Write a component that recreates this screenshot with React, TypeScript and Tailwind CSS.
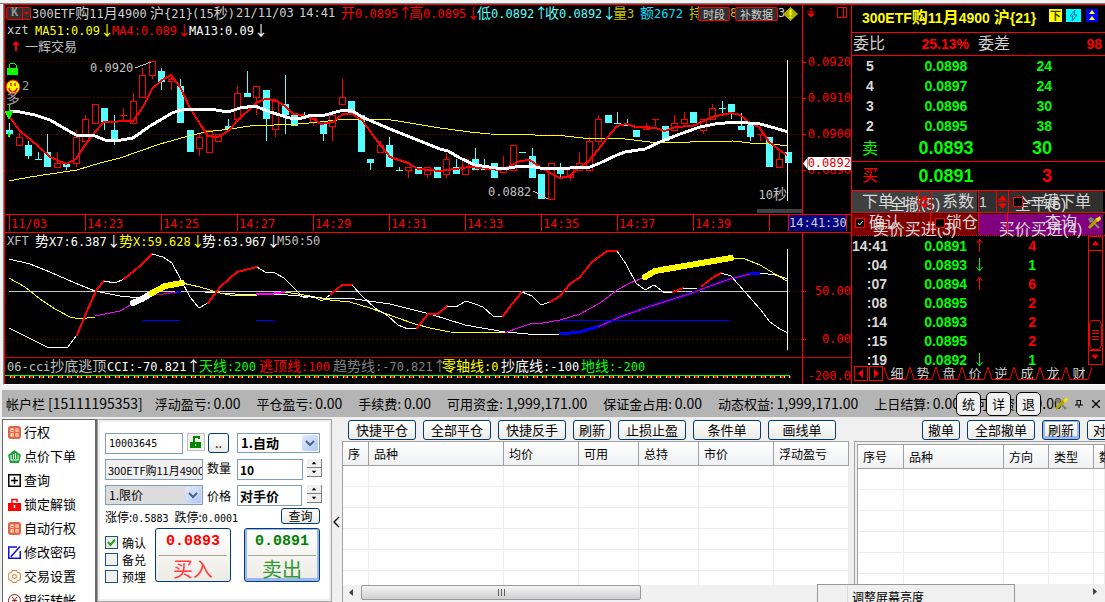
import { Fragment } from "react";
import type { ReactNode } from "react";
import clsx from "clsx";

type Candle = ["r" | "c", number, number, number, number];

// direction, high, low, body top, body bottom
const candles: Candle[] = [
  ["c", 123, 137, 130, 134], ["r", 133, 145, 137, 145], ["c", 141, 159, 145, 156],
  ["c", 152, 160, 159, 160], ["c", 134, 167, 152, 167], ["r", 152, 167, 163, 167],
  ["c", 164, 170, 164, 167], ["r", 130, 167, 137, 163], ["r", 115, 141, 119, 141],
  ["r", 104, 123, 104, 123], ["c", 108, 130, 108, 122], ["c", 115, 145, 130, 141],
  ["r", 108, 120, 115, 116], ["r", 93, 123, 101, 123], ["r", 68, 97, 75, 97],
  ["r", 61, 79, 61, 75], ["c", 68, 90, 71, 82], ["r", 75, 90, 79, 81],
  ["c", 79, 123, 86, 123], ["c", 130, 152, 130, 152], ["r", 134, 156, 137, 148],
  ["r", 130, 152, 130, 152], ["r", 134, 141, 134, 141], ["c", 119, 129, 126, 129],
  ["r", 86, 119, 93, 119], ["c", 71, 97, 93, 97], ["r", 86, 115, 86, 97],
  ["c", 90, 141, 90, 119], ["r", 101, 137, 101, 129], ["c", 75, 134, 104, 115],
  ["c", 115, 126, 115, 126], ["c", 112, 118, 115, 118], ["r", 115, 126, 118, 122],
  ["c", 123, 141, 123, 134], ["r", 115, 141, 115, 126], ["r", 79, 104, 97, 104],
  ["c", 101, 115, 101, 115], ["c", 115, 152, 115, 152], ["c", 159, 170, 159, 163],
  ["r", 141, 152, 145, 152], ["c", 137, 167, 145, 167], ["c", 167, 171, 170, 171],
  ["r", 167, 178, 167, 170], ["c", 167, 174, 167, 174], ["r", 167, 178, 167, 174],
  ["c", 167, 178, 167, 178], ["r", 153, 178, 159, 174], ["c", 159, 174, 167, 174],
  ["r", 159, 174, 159, 174], ["c", 148, 170, 159, 170], ["c", 159, 170, 167, 170],
  ["c", 163, 178, 163, 178], ["r", 156, 172, 168, 172], ["r", 145, 170, 145, 170],
  ["c", 152, 153, 152, 153], ["c", 148, 178, 156, 178], ["c", 174, 199, 174, 199],
  ["r", 163, 199, 163, 199], ["c", 163, 177, 169, 174], ["r", 167, 181, 168, 177],
  ["r", 152, 170, 163, 170], ["r", 137, 170, 141, 170], ["r", 115, 145, 119, 141],
  ["c", 115, 123, 115, 123], ["c", 112, 124, 123, 124], ["c", 119, 126, 124, 126],
  ["c", 130, 137, 130, 137], ["r", 123, 130, 126, 129], ["r", 119, 126, 119, 120],
  ["c", 126, 141, 126, 141], ["r", 115, 130, 123, 130], ["r", 112, 123, 119, 123],
  ["c", 112, 123, 112, 123], ["r", 119, 134, 119, 130], ["r", 104, 119, 108, 119],
  ["c", 101, 113, 108, 109], ["c", 104, 119, 104, 112], ["c", 113, 130, 126, 130],
  ["c", 125, 141, 125, 137], ["r", 134, 141, 134, 135], ["c", 137, 167, 137, 167],
  ["r", 152, 167, 159, 167], ["c", 152, 163, 152, 163],
];

const ma51 =
  "9,181 30,177 50,174 77,170 100,163 120,158 140,151 160,144 185,137 205,132 230,129 250,126 298,124 320,122 345,119 385,119 410,123 440,128 470,132 490,134 535,135 565,136 583,138 617,138 650,142 690,142 733,141 750,143 765,143 788,146";
const ma4 =
  "9,116 20,131 38,146 50,157 66,164 76,159 85,145 95,132 104,122 133,121 143,107 152,89 162,80 171,75 180,87 190,108 200,124 208,136 218,137 228,131 240,118 250,109 256,103 265,99 275,100 285,106 293,114 303,115 313,119 321,124 333,122 343,114 352,114 362,120 375,138 390,157 408,163 418,169 440,171 455,169 470,167 500,170 510,166 520,161 530,160 540,167 550,173 560,178 570,176 578,168 588,162 598,150 607,138 617,126 626,124 636,127 655,128 665,131 675,127 692,126 702,122 712,117 721,115 731,113 740,115 750,123 759,127 769,142 778,149 788,156";
const ma13 =
  "9,111 20,112 35,115 50,120 62,127 76,135 95,136 105,140 115,141 133,138 150,126 162,119 172,113 185,109 210,109 228,112 240,108 255,106 270,112 290,118 302,118 312,115 325,115 340,111 351,110 362,117 390,129 420,141 440,149 448,151 460,158 475,165 503,169 515,167 530,166 545,169 570,168 590,167 600,163 617,155 625,152 645,149 662,141 680,134 700,127 715,124 735,122 760,124 775,128 788,132";

// stroke colour, stroke width, points
const trendLines: [string, number, string][] = [
  ["#fff", 1, "9,259 30,264 50,272 75,283 95,291 120,296 140,298"],
  ["#fff", 1, "205,292 235,294 265,295 275,294 300,296 322,298 355,299 390,304 430,314 465,325 505,332 540,335 560,334"],
  ["#00f", 3, "560,334 580,332 600,326 620,317 645,308 670,300 695,292 710,286 730,279 750,274 760,273"],
  ["#f00", 1, "598,327 620,317 645,308 670,300 695,292 710,286 730,279 750,274"],
  ["#fff", 1, "760,273 775,275 788,279"],
  ["#ff0", 1, "9,278 25,287 40,299 55,309 70,317 80,319 95,317"],
  ["#f0f", 1, "95,316 120,311 132,304"],
  ["#00f", 2, "142,296 180,292"],
  ["#f00", 1, "157,295 176,292"],
  ["#fff", 6, "133,303 142,299 152,293"],
  ["#ff0", 6, "152,293 165,286 182,283"],
  ["#ff0", 1, "182,283 200,287 220,293 235,296 257,295"],
  ["#f0f", 2, "257,294 270,294 285,292"],
  ["#ff0", 1, "285,292 310,296 330,300 350,302 370,308 395,317 415,324 430,328 450,332 505,333"],
  ["#f0f", 1, "505,333 515,329 530,324 543,323 560,320 580,314 600,303 617,290 630,283 645,277"],
  ["#ff0", 6, "645,277 655,271 690,265 731,258"],
  ["#ff0", 1, "731,258 745,259 760,265 775,274 787,281"],
  ["#fff", 1, "9,328 25,336 47,347 67,348 77,335"],
  ["#f00", 2, "77,335 87,311 97,289 104,281"],
  ["#fff", 1, "104,281 115,283 124,279"],
  ["#f00", 2, "124,279 140,266 152,254"],
  ["#fff", 1, "152,254 163,257 172,263 181,280 190,297 199,308 208,303"],
  ["#f00", 2, "208,303 220,287 237,272 257,267"],
  ["#fff", 1, "257,267 265,272 275,273 284,278 294,288 304,298 312,296 322,301 331,294"],
  ["#f00", 2, "331,294 342,285 352,285"],
  ["#fff", 1, "352,285 362,296 375,308 388,316 398,325 408,329 417,328"],
  ["#f00", 2, "417,328 428,314 438,314 447,306"],
  ["#fff", 1, "447,306 456,307 466,301 475,304 483,307 493,316 503,316"],
  ["#f00", 2, "503,316 512,304 522,292"],
  ["#fff", 1, "522,292 532,296 541,305 550,302"],
  ["#f00", 2, "550,302 560,296 570,284 580,277 592,262 607,251 617,251"],
  ["#fff", 1, "617,251 626,264 636,283 645,290 654,285 665,293 673,292"],
  ["#f00", 2, "673,292 683,288"],
  ["#fff", 1, "683,288 697,288"],
  ["#f00", 2, "702,286 712,278 721,273"],
  ["#fff", 1, "721,273 731,276 745,292 760,309 770,322 780,329 788,333"],
  ["#00f", 1, "142,320 180,320"],
  ["#00f", 1, "256,320 275,320"],
  ["#00f", 1, "560,320 730,320"],
];

const book = [
  ["5", "0.0898", "24"],
  ["4", "0.0897", "24"],
  ["3", "0.0896", "30"],
  ["2", "0.0895", "38"],
];

const ticks = [
  { time: "14:41", price: "0.0891", dir: "up", qty: 4 },
  { time: ":04", price: "0.0893", dir: "down", qty: 1 },
  { time: ":07", price: "0.0894", dir: "up", qty: 6 },
  { time: ":08", price: "0.0895", dir: "", qty: 2 },
  { time: ":14", price: "0.0893", dir: "", qty: 2 },
  { time: ":15", price: "0.0895", dir: "", qty: 2 },
  { time: ":19", price: "0.0892", dir: "down", qty: 1 },
];

const times = ["11/03", "14:23", "14:25", "14:27", "14:29", "14:31", "14:33", "14:35", "14:37", "14:39"];

const xb =
  "h-5 shrink-0 rounded-[3px] border border-[#003c74] bg-linear-to-b from-white to-[#ecebe5] text-center text-[13px] leading-[18px] text-black";

// Latin runs in a narrow monospace, CJK and arrows at full width
function Mono({ text, className }: { text: string; className?: string }) {
  return (
    <span className={clsx("shrink-0 whitespace-pre font-['DejaVu_Sans_Mono',monospace] text-[12px]", className)}>
      {text.split(/([\u2190-\u2193\u4e00-\u9fff]+)/).map((run, i) =>
        i % 2 ? (
          <span key={i} className="font-['Noto_Sans_CJK_SC',sans-serif] text-[14px]">{run}</span>
        ) : (
          <Fragment key={i}>{run}</Fragment>
        )
      )}
    </span>
  );
}

function Tools({ className }: { className?: string }) {
  return (
    <svg viewBox="0 0 14 14" className={clsx("h-3.5 w-3.5 shrink-0", className)}>
      <path d="M1 3l3-2 3 2-1 2 7 6-2 2-6-7-2 1z" fill="#808070" />
      <path d="M13 1l-4 1-8 9 2 2 8-8z" fill="#b0a000" />
      <path d="M13 0l1 3-3 3-2-3z" fill="#f0e020" />
    </svg>
  );
}

function MainChart() {
  return (
    <div className="relative">
      <svg viewBox="5 54 797 160" preserveAspectRatio="none" shapeRendering="crispEdges" className="block h-[160px] w-full">
        {[61, 97, 134, 170].map((y) => (
          <line key={y} x1="5" x2="802" y1={y + 0.5} y2={y + 0.5} stroke="#900000" strokeDasharray="1 3" />
        ))}
        {candles.map(([kind, hi, lo, top, bottom], i) => {
          const x = Math.round(9 + i * 9.5);
          const color = kind === "r" ? "#f00" : "#5ff";
          const flat = bottom - top < 2;
          return (
            <g key={i} fill={color}>
              {hi < top && <rect x={x} y={hi} width="1" height={top - hi} />}
              {lo > bottom && <rect x={x} y={bottom} width="1" height={lo - bottom} />}
              {kind === "r" && !flat ? (
                <rect x={x - 2.5} y={top + 0.5} width="6" height={bottom - top} fill="none" stroke={color} />
              ) : (
                <rect x={x - 3} y={top} width="7" height={Math.max(1, bottom - top)} />
              )}
            </g>
          );
        })}
        <g fill="none">
          <polyline points={ma51} stroke="#ff0" />
          <polyline points={ma4} stroke="#f00" strokeWidth="2" />
          <polyline points={ma13} stroke="#fff" strokeWidth="3" />
          <path d="M135 68l16-6M533 191l15 8" stroke="#c0c0c0" />
        </g>
        <rect x="787" y="60" width="1" height="141" fill="#fff" />
        <rect x="757" y="209" width="45" height="4" fill="#404040" />
        {/* lock, face and entry marker */}
        <path d="M9 69v-4l2-2h3l2 2v4" fill="none" stroke="#0f0" />
        <rect x="7" y="68" width="11" height="7" fill="#0f0" />
        <rect x="12" y="70" width="1" height="2" fill="#ff0" />
        <g shapeRendering="auto">
          <circle cx="13" cy="87" r="7" fill="#ff0" stroke="#f00" />
          <path d="M9 88c1 5 7 5 8 0M11 83v3M15 83v3" fill="none" stroke="#f00" strokeWidth="1.4" />
        </g>
        <path d="M9 105v8M5 111h8l-4 8z" stroke="#0f0" fill="#0f0" />
        <path d="M8 132l3 3-3 2z" fill="#0f0" />
      </svg>
      <Mono text="2" className="absolute left-[17px] top-[25px] leading-[14px] text-[#a0a0a0]" />
      <Mono text="多" className="absolute left-[1px] top-[36px] leading-[14px] text-[#a0a0a0]" />
      <Mono text="0.0920" className="absolute left-[85px] top-[7px] leading-[14px] text-[#c0c0c0]" />
      <Mono text="0.0882" className="absolute left-[483px] top-[131px] leading-[14px] text-[#c0c0c0]" />
      <Mono text="10秒" className="absolute right-[15px] top-[132px] leading-[14px] text-[#c0c0c0]" />
    </div>
  );
}

function QuotePane() {
  return (
    <section className="flex border-b border-[#f00]">
      <div className="min-w-0 flex-1">
        <div className="flex h-[17px] items-center overflow-x-clip leading-[17px] text-[#d0d0d0]">
          <div className="mx-px flex h-[13px] w-[25px] shrink-0 rounded-[2px] border border-[#f00] bg-[#303030]">
            <span className="flex-1 text-center font-['Liberation_Mono',monospace] text-[12px] font-bold leading-[11px] text-[#909090]">K</span>
            <svg viewBox="0 0 8 11" className="h-full w-2 border-l border-[#f00]"><path d="M1 4h6l-3 3z" fill="#f00" /></svg>
          </div>
          <Mono text="300ETF购11月4900" className="w-[118px]" />
          <Mono text="沪{21}" className="w-[42px]" />
          <Mono text="(15秒)" className="w-[44px]" />
          <Mono text="21/11/03" className="w-[63px]" />
          <Mono text="14:41" className="w-[42px]" />
          <Mono text="开0.0895↑" className="w-[68px] text-[#f00]" />
          <Mono text="高0.0895↓" className="w-[68px] text-[#f00]" />
          <Mono text="低0.0892↑" className="w-[68px] text-[#5ff]" />
          <Mono text="收0.0892↓" className="w-[68px] text-[#5ff]" />
          <Mono text="量3" className="w-[27px] text-[#c8c800]" />
          <Mono text="额2672" className="w-[49px] text-[#00e0ff]" />
          <Mono text="持" className="w-[9px] text-[#c8c800]" />
          <button className="relative h-[14px] w-[32px] shrink-0 rounded-[2px] border border-[#f00] bg-[#303030] text-[11px] leading-[12px]">时段</button>
          <Mono text="8" className="w-[5px] text-[#c8c800]" />
          <button className="relative h-[14px] w-[43px] shrink-0 rounded-[2px] border border-[#f00] bg-[#303030] text-[11px] leading-[12px]">补数据</button>
          <Mono text="3" className="w-[5px]" />
          <svg viewBox="0 0 15 14" className="relative h-3.5 w-[15px] shrink-0">
            <path d="M7.500 0L15 7l-7.500 7L0 7z" fill="#b0b000" />
            <path d="M7 3h1v5h-1zM7 10h1v1h-1z" fill="#ff0" stroke="#ff0" />
          </svg>
        </div>
        <div className="flex h-4 items-center pl-0.5 leading-4">
          <Mono text="xzt" className="w-7 text-[#d0d0d0]" />
          <Mono text="MA51:0.09↓" className="w-[77px] text-[#ff0]" />
          <Mono text="MA4:0.089↓" className="w-[77px] text-[#f00]" />
          <Mono text="MA13:0.09↓" className="text-white" />
        </div>
        <div className="flex h-4 items-center gap-1 pl-1.5 leading-4">
          <svg viewBox="0 0 10 10" className="h-2.5 w-2.5"><path d="M5 0l4 4H6v6H4V4H1z" fill="#f00" /></svg>
          <span className="text-[13px] text-[#c0c0c0]">一辉交易</span>
        </div>
        <MainChart />
      </div>
      <div className="relative w-[49px] shrink-0 border-l border-[#f00]">
        <div className="flex h-[39px] items-start justify-between pl-[3px] pr-1 pt-0.5">
          <svg viewBox="0 0 10 10" className="mt-px h-2.5 w-2.5"><path d="M3 0h4M5 0v6M1 4h8M2 6h6l-3 3z" stroke="#f00" fill="#f00" /></svg>
          <svg viewBox="0 0 10 11" className="h-[11px] w-2.5"><path d="M.5.5h9v10h-9zM6.500 0v11" stroke="#f00" fill="none" /></svg>
        </div>
        {["0.0920", "0.0910", "0.0900", "0.0890"].map((v) => (
          <div key={v} className="flex h-9 items-center gap-0.5 text-[#f00]">
            <i className="h-px w-[3px] bg-[#f00]" />
            <Mono text={v} />
          </div>
        ))}
        <div className="absolute left-0 top-[152px] flex h-[13px] w-full items-center">
          <svg viewBox="0 0 5 13" className="h-[13px] w-[5px]"><path d="M5 0L0 6.500 5 13z" fill="#fff" /></svg>
          <Mono text="0.0892" className="flex-1 bg-white leading-[13px] text-[#e00000]" />
        </div>
      </div>
    </section>
  );
}

function Charts() {
  return (
    <div className="min-w-0 flex-1 overflow-x-clip">
      <QuotePane />
      <div className="flex h-[18px] border-b border-[#f00] pl-1 text-[#f00]">
        {times.map((t) => (
          <Mono key={t} text={t} className="h-4 w-[76px] border-l border-[#f00] pl-px leading-[18px]" />
        ))}
        <span className="h-4 w-[19px] shrink-0 border-l border-[#f00]" />
        <Mono text="14:41:30" className="h-4 w-[59px] border-x border-[#f00] bg-[#000080] leading-[16px] text-[#d0d0d0]" />
      </div>
      <section className="flex border-b border-[#d00000]">
        <div className="min-w-0 flex-1">
          <div className="flex h-4 items-center pl-0.5 leading-4">
            <Mono text="XFT" className="w-7 text-[#c0c0c0]" />
            <Mono text="势X7:6.387↓" className="w-[84px] text-white" />
            <Mono text="势X:59.628↓" className="w-[83px] text-[#ff0]" />
            <Mono text="势:63.967↓" className="w-[75px] text-white" />
            <Mono text="M50:50" className="text-[#c0c0c0]" />
          </div>
          <svg viewBox="5 249 797 108" preserveAspectRatio="none" shapeRendering="crispEdges" className="block h-[108px] w-full">
            <path d="M5 291.500h797M5 339.500h797" stroke="#900000" strokeDasharray="1 3" />
            <path d="M9 291.500h779" stroke="#c8c8c8" />
            {trendLines.map(([stroke, width, points], i) => (
              <polyline key={i} points={points} fill="none" stroke={stroke} strokeWidth={width} strokeLinecap="round" />
            ))}
            <path d="M787.500 249v101" stroke="#fff" />
          </svg>
        </div>
        <div className="w-[49px] shrink-0 border-l border-[#f00] pt-[34px] text-[#f00]">
          <div className="flex h-12 items-center justify-between">
            <i className="h-px w-[3px] bg-[#f00]" />
            <Mono text="50.00" />
          </div>
          <div className="flex h-[42px] items-center justify-between pt-1.5">
            <i className="h-px w-[3px] bg-[#f00]" />
            <Mono text="0.00" />
          </div>
        </div>
      </section>
      <section className="flex h-[26px]">
        <div className="min-w-0 flex-1">
          <div className="flex h-[17px] items-center pl-0.5 leading-[17px]">
            <Mono text="06-cci抄底逃顶" className="w-[100px] text-[#c0c0c0]" />
            <Mono text="CCI:-70.821↑" className="w-[92px] text-white" />
            <Mono text="天线:200" className="w-[60px] text-[#0f0]" />
            <Mono text="逃顶线:100" className="w-[74px] text-[#f00]" />
            <Mono text="趋势线:-70.821↑" className="w-[109px] text-[#808080]" />
            <Mono text="零轴线:0" className="w-[59px] text-[#ff0]" />
            <Mono text="抄底线:-100" className="w-20 text-white" />
            <Mono text="地线:-200" className="text-[#0f0]" />
          </div>
          <svg viewBox="5 375 797 9" preserveAspectRatio="none" shapeRendering="crispEdges" className="block h-[9px] w-full">
            <path d="M5 375.500h785" stroke="#0f0" />
            <path d="M10 376.500h780" stroke="#ff0" strokeWidth="2" strokeDasharray="5 4.500" />
            <path d="M11 376.500h780" stroke="#f00" strokeWidth="2" strokeDasharray="3 6.500" />
          </svg>
        </div>
        <div className="flex w-[49px] shrink-0 justify-end border-l border-[#f00] pt-2.5">
          <Mono text="-200.0" className="leading-4 text-[#f00]" />
        </div>
      </section>
    </div>
  );
}

function SpinMark() {
  return (
    <svg viewBox="0 0 12 21" className="h-[21px] w-3 shrink-0 border-l border-[#f00]">
      <path d="M6 4l4 5H2zM6 18l-4-5h8zM0 10.500h12" fill="#f00" stroke="#f00" strokeWidth=".6" />
    </svg>
  );
}

function QuickOrder() {
  return (
    <div className="relative h-[44px] text-[16px] leading-5 text-[#d8d8d8]">
      <div className="grid h-full grid-cols-2 grid-rows-2 gap-px pr-0.5">
        <button className="bg-[#404040] pt-1">全撤(5)</button>
        <button className="bg-[#303030] pt-1">全平(6)</button>
        <button className="bg-[#800000] pt-1.5">卖价买进(3)</button>
        <button className="bg-[#800080] pt-1.5">买价买进(4)</button>
      </div>
      <div className="absolute inset-x-0 top-0 flex h-[22px] items-center border-b border-[#f00] pl-2.5">
        <label className="flex items-center">下单<span className="w-[24px] pl-1.5 text-[14px]">1</span></label>
        <SpinMark />
        <label className="ml-px flex h-full w-12 items-center border-x border-[#f00] pl-2.5">系数</label>
        <span className="w-[17px] text-[14px]">1</span>
        <SpinMark />
        <label className="flex h-full items-center gap-1 whitespace-nowrap border-l border-[#f00] pl-1">
          <input type="checkbox" className="h-2.5 w-2.5 appearance-none border border-[#f00] bg-black" />一键下单
        </label>
      </div>
      <div className="absolute inset-x-0 bottom-[3px] flex h-[19px] items-center pl-[3px]">
        <label className="flex w-[75px] items-center">
          <input type="checkbox" defaultChecked className="h-2.5 w-2.5 appearance-none border border-[#f00] bg-black" />
          <svg viewBox="0 0 10 10" className="-ml-2.5 mr-1 h-2.5 w-2.5"><path d="M3 5l1.500 2L8 3" stroke="#fff" fill="none" /></svg>
          确认
        </label>
        <label className="flex h-full w-12 items-center gap-px border-l border-[#f00] pl-1">
          <input type="checkbox" className="h-2.5 w-2.5 shrink-0 appearance-none border border-[#f00] bg-black" />
          <span className="shrink-0">锁仓</span>
        </label>
        <span className="h-full w-[30px] border-x border-[#f00]" />
        <button className="ml-[35px] w-9 shrink-0">查询</button>
        <Tools className="ml-2" />
      </div>
    </div>
  );
}

function QuotePanel() {
  return (
    <aside className="w-[254px] shrink-0 border-l border-[#f00] font-['Liberation_Sans','Noto_Sans_CJK_SC',sans-serif] text-[14px] font-bold">
      <div className="flex h-[28px] items-center border-b border-[#f00] pl-2.5 text-[#ff0]">
        <h1 className="w-[187px] whitespace-nowrap pb-0.5 leading-6">
          300ETF<span className="text-[16px]">购</span>11<span className="text-[16px]">月</span>4900 <span className="text-[16px]">沪</span>{"{21}"}
        </h1>
        <div className="mb-1.5 flex gap-1">
          <button className="h-[13px] w-[13px] bg-[#ff0] text-[11px] leading-[12px] text-[#404000]">下</button>
          <button className="h-[13px] w-[15px] bg-[#0ff]">
            <svg viewBox="0 0 15 13" className="h-full w-full"><path d="M9 1L4 7h3l-1 5 5-6H8z" fill="none" stroke="#06c" /></svg>
          </button>
          <button className="ml-px h-[13px] w-3 bg-[#00f]">
            <svg viewBox="0 0 12 13" className="h-full w-full"><path d="M6 1l3 4H3zM6 7l3 4H3z" fill="#ff0" /></svg>
          </button>
        </div>
      </div>
      <div className="flex h-[23px] items-center border-b border-[#f00] pl-px pr-[3px] text-[#f00]">
        <span className="text-[16px] font-normal leading-5 text-[#d0d0d0]">委比</span>
        <span className="w-[93px] pr-[9px] text-right">25.13%</span>
        <span className="text-[16px] font-normal leading-5 text-[#d0d0d0]">委差</span>
        <span className="flex-1 text-right">98</span>
      </div>
      <table className="w-[200px] table-fixed text-[#0f0]">
        <colgroup><col className="w-9" /><col className="w-[116px]" /><col className="w-12" /></colgroup>
        <tbody>
          {book.map(([level, price, qty]) => (
            <tr key={level} className="h-5 text-center leading-5">
              <td className="text-[#d8d8d8]">{level}</td>
              <td>{price}</td>
              <td className="text-right">{qty}</td>
            </tr>
          ))}
          <tr className="h-[25px] text-center text-[18px] leading-[25px]">
            <td className="text-[16px] font-normal">卖</td>
            <td>0.0893</td>
            <td className="text-right">30</td>
          </tr>
        </tbody>
      </table>
      <div className="border-y border-[#f00]">
        <table className="w-[200px] table-fixed text-[#0f0]">
          <colgroup><col className="w-9" /><col className="w-[116px]" /><col className="w-12" /></colgroup>
          <tbody>
            <tr className="h-7 text-center text-[18px] leading-[26px]">
              <td className="text-[16px] font-normal text-[#f00]">买</td>
              <td>0.0891</td>
              <td className="text-right text-[#f00]">3</td>
            </tr>
          </tbody>
        </table>
      </div>
      <div className="font-normal"><QuickOrder /></div>
      <div className="flex h-[130px] justify-between border-t border-dotted border-[#f00] pr-0.5">
        <table className="h-fit w-[184px] table-fixed">
          <colgroup><col className="w-[35px]" /><col className="w-20" /><col className="w-[25px]" /><col className="w-11" /></colgroup>
          <tbody>
            {ticks.map((t) => (
              <tr key={t.time} className="text-right leading-[18px] text-[#0f0]">
                <td className="h-[19px] whitespace-nowrap p-0 text-[#d8d8d8]">{t.time}</td>
                <td>{t.price}</td>
                <td>
                  {t.dir && (
                    <svg viewBox="0 0 7 13" className="mx-auto h-[13px] w-[7px]">
                      {t.dir === "up" ? (
                        <path d="M3.500 0v13M.5 4l3-4 3 4" stroke="#f00" fill="none" />
                      ) : (
                        <path d="M3.500 0v13M.5 9l3 4 3-4" stroke="#0f0" fill="none" />
                      )}
                    </svg>
                  )}
                </td>
                <td className={t.qty === 1 ? "" : "text-[#f00]"}>{t.qty}</td>
              </tr>
            ))}
          </tbody>
        </table>
        <div className="flex w-[15px] flex-col justify-between border border-[#f00]">
          <svg viewBox="0 0 13 14" className="h-3.5 border-b border-[#f00]"><path d="M6.500 4l4 5h-8z" fill="#f00" /></svg>
          <div>
            <svg viewBox="0 0 13 30" className="h-[30px]"><path d="M2.500.5h8l2 3v22l-2 4h-8l-2-4v-22zM3 10.500h7M3 13.500h7M3 16.500h7M3 19.500h7" fill="none" stroke="#f00" /></svg>
            <svg viewBox="0 0 13 14" className="h-3.5 border-t border-[#f00]"><path d="M6.500 9l4-5h-8z" fill="#f00" /></svg>
          </div>
        </div>
      </div>
      <div className="flex h-4 gap-px pl-0.5 pt-px font-normal text-[#d0d0d0]">
        <button className="h-[15px] w-3.5 border border-[#f00]"><svg viewBox="0 0 12 13" className="h-full w-full"><path d="M8 2v9L3 6.500z" fill="#f00" /></svg></button>
        <button className="h-[15px] w-3.5 border border-[#f00]"><svg viewBox="0 0 12 13" className="h-full w-full"><path d="M4 2v9l5-4.500z" fill="#f00" /></svg></button>
        <div className="flex">
          {["细", "势", "盘", "价", "逆", "成", "龙", "财"].map((t) => (
            <button key={t} className="relative w-[26px] text-[13px] leading-[14px]">
              <svg viewBox="0 0 26 15" className="absolute inset-0 h-[15px] w-[26px]"><path d="M0 1l4 12.500h18L26 1" fill="none" stroke="#f00" /></svg>
              {t}
            </button>
          ))}
        </div>
      </div>
    </aside>
  );
}

const stats = [
  ["浮动盈亏", "0.00"],
  ["平仓盈亏", "0.00"],
  ["手续费", "0.00"],
  ["可用资金", "1,999,171.00"],
  ["保证金占用", "0.00"],
  ["动态权益", "1,999,171.00"],
  ["上日结算", "0.00"],
  ["可取资金", "0.00"],
];

function AccountBar() {
  return (
    <div className="relative ml-0.5 mt-[5px] flex h-[27px] shrink-0 items-center overflow-hidden whitespace-nowrap bg-[#b4b4b4] pl-1 text-[13px]">
      <span className="mr-3">帐户栏 <span className="text-[14px]">[15111195353]</span></span>
      <div className="flex min-w-0 flex-1 gap-4">
        {stats.map(([label, value]) => (
          <span key={label}>{label}: <span className="text-[14px]">{value}</span></span>
        ))}
      </div>
      <div className="absolute right-[5px] top-0 flex h-full items-center">
        <div className="mr-[18px] flex gap-[5px]">
          {["统", "详", "退"].map((t) => (
            <button key={t} className="h-6 w-[25px] rounded-[5px] border border-black bg-[#f0f0f0] text-[13px] leading-[20px]">{t}</button>
          ))}
        </div>
        <Tools className="-ml-[5px] mr-[7px]" />
        <svg viewBox="0 0 8 8" className="mr-[9px] h-2 w-2"><path d="M2 0v5M5.500 0v5M2 .5h4M0 5h8M4 5v3" stroke="#000" fill="none" /></svg>
        <svg viewBox="0 0 8 8" className="h-2 w-2"><path d="M0 0l8 8M8 0L0 8" stroke="#000" strokeWidth="1.400" /></svg>
      </div>
    </div>
  );
}

const gridIcon = (
  <>
    <rect width="13" height="13" rx="3" fill="#e8633c" />
    <path d="M2.500 2.500h3.200v3.200H2.500zM7.500 2.500h3v3.200h-3zM2.500 7.300h3.200v3.200H2.500zM7.500 7.300h3v3.200h-3z" fill="#fff" />
    <path d="M3 4.500h2.500M9 3v2.500M3.500 9h2M8 9h2" stroke="#e8633c" />
  </>
);

const menu: { label: string; icon: ReactNode }[] = [
  { label: "行权", icon: gridIcon },
  {
    label: "点价下单",
    icon: (
      <>
        <path d="M6.500 0L13 5l-2 8H2L0 5z" fill="#1fa038" />
        <path d="M3 5v5h7V5M5.500 4v5M7.500 3v6" stroke="#fff" fill="none" />
      </>
    ),
  },
  { label: "查询", icon: <path d="M.75.75h11.500v11.500H.75zM6.500 3v7M3 6.500h7" stroke="#000" strokeWidth="1.500" fill="none" /> },
  {
    label: "锁定解锁",
    icon: (
      <>
        <path d="M4 6V1.500h5V4" stroke="red" strokeWidth="1.500" fill="none" />
        <path d="M0 5h13v8H0z" fill="red" />
        <path d="M6.500 7v3" stroke="#fff" strokeWidth="1.500" />
      </>
    ),
  },
  { label: "自动行权", icon: gridIcon },
  { label: "修改密码", icon: <path d="M9 1H.75v11.300h11.500V5M4 9.500l8-9M3 11l1-2" stroke="#1010e0" strokeWidth="1.500" fill="none" /> },
  {
    label: "交易设置",
    icon: (
      <>
        <path d="M4.500.5h4l1 2 2.500.500.500 4-.500 3-2.500.500-1 2h-4l-1-2L1 10 .5 6.500 1 3l2.500-.500z" stroke="#e07820" fill="none" />
        <circle cx="6.500" cy="6.500" r="2" stroke="#e07820" fill="none" />
      </>
    ),
  },
  {
    label: "银衍转帐",
    icon: (
      <>
        <circle cx="6.500" cy="6.500" r="6" stroke="#a01818" fill="none" />
        <path d="M4 3l2.500 3L9 3M6.500 6v5M4 6.500h5M4 8.500h5" stroke="#a01818" fill="none" />
      </>
    ),
  },
];

function Spinner() {
  return (
    <div className="ml-1 flex flex-col">
      {["M7 3l2.500 3h-5z", "M7 6l2.500-3h-5z"].map((d) => (
        <button key={d} type="button" className="h-[9px] w-[15px] border-b border-r border-[#808080] bg-[#f0f0f0]">
          <svg viewBox="0 0 14 9" className="h-2 w-3.5"><path d={d} fill="#000" /></svg>
        </button>
      ))}
    </div>
  );
}

function Select({ value, label, className }: { value: string; label: string; className?: string }) {
  return (
    <div className={clsx("relative h-5 border border-[#7f9db9]", className)}>
      <select aria-label={label} className="block h-full w-full appearance-none pl-[3px] leading-[18px] outline-none">
        <option>{value}</option>
      </select>
      <span className="pointer-events-none absolute inset-y-px right-px w-4 rounded-[2px] bg-linear-to-br from-[#e1eafe] to-[#aec8f7]">
        <svg viewBox="0 0 16 16" className="h-full w-full"><path d="M4 6l4 4 4-4" stroke="#4d6185" strokeWidth="2" fill="none" /></svg>
      </span>
    </div>
  );
}

function OrderForm() {
  return (
    <form className="w-[235px] shrink-0 border border-[#a0a0a0] bg-white pl-[7px] pt-[13px] text-[12px] leading-[18px] shadow-[inset_0_0_0_2px_#f0f0f0]">
      <div className="flex h-[26px] items-start">
        <input aria-label="合约代码" defaultValue="10003645" className="h-[21px] w-[78px] border border-[#7f9db9] px-[3px] font-['DejaVu_Sans_Mono',monospace] text-[10px]" />
        <button type="button" aria-label="解锁" className="ml-1 h-[18px] w-[18px] border border-[#c0c0c0] bg-[#f0f0f0]">
          <svg viewBox="0 0 16 16" className="h-4 w-4"><path d="M6 8V3h5v2" fill="none" stroke="#080" strokeWidth="2" /><path d="M2 8h11v6H2z" fill="#080" /><path d="M7.500 10v2" stroke="#fff" /></svg>
        </button>
        <button type="button" className={clsx(xb, "ml-[3px] w-[21px]")}>..</button>
        <Select label="开平" value="1.自动" className="ml-2 w-[83px] text-[13px] font-bold" />
      </div>
      <div className="flex h-[26px] items-start">
        <input aria-label="合约名称" readOnly value="300ETF购11月4900" className="h-[21px] w-[98px] border border-[#7f9db9] bg-[#f0f0f0] pl-0.5 text-[11px]" />
        <label htmlFor="qty" className="ml-1 w-[30px]">数量</label>
        <input id="qty" defaultValue="10" className="h-[21px] w-[66px] border border-[#7f9db9] px-0.5 font-bold" />
        <Spinner />
      </div>
      <div className="flex h-[23px] items-start">
        <Select label="价格类型" value="1.限价" className="w-[98px] bg-[#dcdcdc]" />
        <label htmlFor="price" className="ml-1 w-[30px] pt-0.5">价格</label>
        <input id="price" defaultValue="对手价" className="h-[21px] w-[65px] border border-[#7f9db9] px-0.5 text-[13px] font-bold" />
        <div className="ml-px"><Spinner /></div>
      </div>
      <div className="flex h-5 items-start">
        <span className="w-44">
          涨停:<span className="font-['DejaVu_Sans_Mono',monospace] text-[10px]">0.5883 </span>跌停:<span className="font-['DejaVu_Sans_Mono',monospace] text-[10px]">0.0001</span>
        </span>
        <button type="button" className="h-4 w-[39px] rounded-[3px] border border-[#003c74] bg-linear-to-b from-white to-[#ecebe5] leading-[14px]">查询</button>
      </div>
      <div className="flex">
        <div className="flex w-[50px] flex-col pt-1.5">
          {["确认", "备兑", "预埋"].map((t, i) => (
            <label key={t} className="flex h-[17px] items-center gap-1">
              <input type="checkbox" defaultChecked={i === 0} className="peer h-[13px] w-[13px] appearance-none border border-[#1c5180] bg-[#f0f0ec]" />
              <svg viewBox="0 0 13 13" className="-ml-[17px] hidden h-[13px] w-[13px] peer-checked:block"><path d="M3 6l2.500 3L10 3.500" stroke="#21a121" strokeWidth="2" fill="none" /></svg>
              {t}
            </label>
          ))}
        </div>
        <button type="button" className="h-[54px] w-[76px] rounded-[3px] border border-[#003c74] bg-linear-to-b from-white to-[#ecebe5] px-[3px]">
          <span className="block border-b border-[#a8a898] font-['Liberation_Mono',monospace] text-[15px] font-bold leading-[26px] text-[#f00]">0.0893</span>
          <span className="block text-[20px] leading-[26px] text-[#ff4040]">买入</span>
        </button>
        <button type="button" className="ml-[13px] h-[54px] w-[76px] rounded-[3px] border border-[#003c74] bg-linear-to-b from-white to-[#ecebe5] px-[3px] shadow-[inset_0_-1px_0_2px_#9db8f0]">
          <span className="block border-b border-[#a8a898] font-['Liberation_Mono',monospace] text-[15px] font-bold leading-[26px] text-[#008000]">0.0891</span>
          <span className="block text-[20px] leading-[26px] text-[#309830]">卖出</span>
        </button>
      </div>
    </form>
  );
}

const head = "border-b border-r border-[#a0a0a0] bg-linear-to-b from-white to-[#eff0f2] pl-[5px] text-left font-normal whitespace-nowrap";

function Grid({ cols, children }: { cols: string[]; children: ReactNode }) {
  return (
    <div className="min-h-0 flex-1 overflow-hidden bg-white">
      <table className="w-full table-fixed border-separate border-spacing-0 text-[12px]">
        {children}
        <thead>
          <tr className="h-6">{cols.map((c) => <th key={c} className={head}>{c}</th>)}</tr>
        </thead>
        <tbody>
          {Array.from({ length: 6 }, (_, r) => (
            <tr key={r} className="h-[21px]">
              {cols.map((c) => <td key={c} className="border-b border-r border-[#ececec]" />)}
            </tr>
          ))}
        </tbody>
      </table>
    </div>
  );
}

function Positions() {
  return (
    <section className="flex min-w-0 flex-1 flex-col">
      <div className="flex h-6 gap-[7px] overflow-hidden pl-1.5 pt-[3px]">
        <button className={clsx(xb, "w-[68px]")}>快捷平仓</button>
        <button className={clsx(xb, "w-[68px]")}>全部平仓</button>
        <button className={clsx(xb, "w-[68px]")}>快捷反手</button>
        <button className={clsx(xb, "w-[38px]")}>刷新</button>
        <button className={clsx(xb, "w-[68px]")}>止损止盈</button>
        <button className={clsx(xb, "w-[68px]")}>条件单</button>
        <button className={clsx(xb, "w-[68px]")}>画线单</button>
      </div>
      <div className="flex min-h-0 flex-1 flex-col border-l border-t border-[#a0a0a0]">
        <Grid cols={["序", "品种", "均价", "可用", "总持", "市价", "浮动盈亏"]}>
          <colgroup>
            <col className="w-[26px]" /><col className="w-[135px]" /><col className="w-[75px]" /><col className="w-[60px]" /><col className="w-[60px]" /><col className="w-[75px]" /><col />
          </colgroup>
        </Grid>
        <div className="flex h-[17px] shrink-0 items-start bg-[#f0f0f0]">
          <svg viewBox="0 0 18 15" className="h-[15px] w-[18px]"><path d="M10 4v7L6 7.500z" fill="#404040" /></svg>
          <div className="flex h-[15px] w-[280px] items-center justify-center gap-0.5 rounded-[2px] border border-[#989898] bg-linear-to-b from-[#f4f4f4] to-[#cfcfd2]">
            <i className="h-[7px] w-px bg-[#606060]" /><i className="h-[7px] w-px bg-[#606060]" /><i className="h-[7px] w-px bg-[#606060]" />
          </div>
        </div>
      </div>
    </section>
  );
}

function Orders() {
  return (
    <section className="ml-[5px] flex w-[251px] shrink-0 flex-col">
      <div className="flex h-6 gap-[7px] overflow-hidden pl-[68px] pt-[3px]">
        <button className={clsx(xb, "w-[38px]")}>撤单</button>
        <button className={clsx(xb, "w-[68px]")}>全部撤单</button>
        <button className={clsx(xb, "w-[38px] shadow-[inset_0_-1px_0_2px_#9db8f0]")}>刷新</button>
        <button className={clsx(xb, "w-[38px]")}>对价</button>
      </div>
      <div className="flex min-h-0 flex-1 border-l border-t border-[#a0a0a0] pl-0.5 pt-0.5">
        <div className="flex min-w-0 flex-1 flex-col border-l border-t border-[#a0a0a0]">
          <Grid cols={["序号", "品种", "方向", "类型", "数量"]}>
            <colgroup>
              <col className="w-[46px]" /><col className="w-[100px]" /><col className="w-[45px]" /><col className="w-[45px]" /><col />
            </colgroup>
          </Grid>
          <div className="flex h-[18px] shrink-0 justify-end bg-[#f0f0f0] pr-1">
            <svg viewBox="0 0 14 15" className="h-[15px] w-3.5"><path d="M6 4v7l4-3.500z" fill="#404040" /></svg>
          </div>
        </div>
      </div>
    </section>
  );
}

export default function App() {
  return (
    <main className="relative flex h-screen flex-col overflow-hidden bg-[#f0f0f0] font-['Noto_Sans_CJK_SC',sans-serif] text-black">
      <div className="h-1 shrink-0 border-b border-[#808080]" />
      <div className="ml-[3px] flex shrink-0 border-b border-l border-b-white border-l-[#808080] bg-black">
        <div className="flex min-w-0 flex-1 border-l border-t border-[#f00]">
          <Charts />
          <QuotePanel />
        </div>
      </div>
      <AccountBar />
      <div className="flex min-h-0 flex-1">
        <nav className="ml-0.5 mt-0.5 w-[95px] shrink-0 overflow-hidden border-l border-r-2 border-t border-[#696969] bg-white pl-[5px]">
          {menu.map((m) => (
            <a key={m.label} href="#" className="flex h-6 items-center gap-[3px] whitespace-nowrap text-[13px]">
              <svg viewBox="0 0 13 13" className="h-[13px] w-[13px] shrink-0">{m.icon}</svg>
              {m.label}
            </a>
          ))}
        </nav>
        <div className="mt-0.5 flex"><OrderForm /></div>
        <button aria-label="收起" className="w-[10px] shrink-0">
          <svg viewBox="0 0 10 12" className="mt-6 h-3 w-2.5"><path d="M7 1L2 6l5 5" stroke="#000" strokeWidth="1.400" fill="none" /></svg>
        </button>
        <Positions />
        <Orders />
      </div>
      <div className="absolute -bottom-[7px] right-[90px] flex h-[25px] w-[198px] items-center border border-[#979797] bg-[#f0f0f0] text-[12px]">
        <span className="mr-1 h-full w-[30px] border-r border-[#dcdcdc]" />
        调整屏幕亮度
      </div>
    </main>
  );
}
